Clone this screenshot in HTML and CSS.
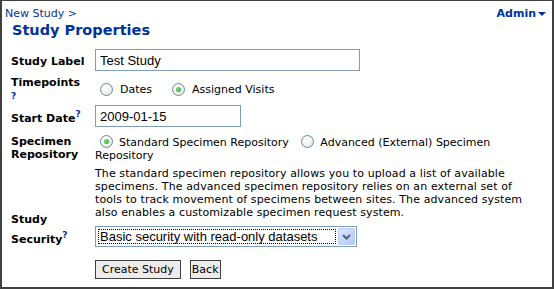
FILE: index.html
```html
<!DOCTYPE html>
<html lang="en">
<head>
    <meta charset="UTF-8">
    <title>Study Properties</title>
    <link rel="stylesheet" href="styles.css">
</head>
<body>

    <div class="frame">
        <!-- Header: breadcrumb and admin menu -->
        <div class="top">
            <div class="crumbs"><a href="#">New Study</a> &gt;</div>
            <div class="admin">Admin<span class="caret"></span></div>
        </div>
        <h1>Study Properties</h1>

        <div class="form">
            <div class="label row-label">Study Label</div>
            <div class="field row-label"><input type="text" class="text wide" value="Test Study"></div>

            <div class="label row-time">Timepoints<br><span class="help">?</span></div>
            <div class="field row-time radios">
                <span class="radio"></span><span class="opt">Dates</span>
                <span class="radio on"></span><span class="opt">Assigned Visits</span>
            </div>

            <div class="label row-date">Start Date<sup class="help">?</sup></div>
            <div class="field row-date"><input type="text" class="text short" value="2009-01-15"></div>

            <div class="label row-spec">Specimen<br>Repository</div>
            <div class="field row-spec spec">
                <span class="radio on"></span><span class="opt">Standard Specimen Repository</span>
                <span class="radio"></span><span class="opt">Advanced (External) Specimen</span><br>Repository
            </div>

            <div class="label"></div>
            <div class="field desc">
                The standard specimen repository allows you to upload a list of available<br>
                specimens. The advanced specimen repository relies on an external set of<br>
                tools to track movement of specimens between sites. The advanced system<br>
                also enables a customizable specimen request system.
            </div>

            <div class="label row-sec">Study<br><span class="sec2">Security<sup class="help">?</sup></span></div>
            <div class="field row-sec">
                <div class="select">
                    <span class="select-value">Basic security with read-only datasets</span>
                    <span class="select-btn">
                        <svg width="9" height="6" viewBox="0 0 9 6"><path d="M1 1 L4.5 4.5 L8 1" fill="none" stroke="#4d6185" stroke-width="2"/></svg>
                    </span>
                </div>
            </div>

            <div class="label"></div>
            <div class="field buttons">
                <button class="btn">Create Study</button>
                <button class="btn btn-tight">Back</button>
            </div>
        </div>
    </div>

</body>
</html>
```

FILE: styles.css
```css
/* Global Styles */
body {
    margin: 0;
    font-family: 'DejaVu Sans', Verdana, sans-serif;
    font-size: 11px;
    line-height: 13px;
    color: #000;
    background: #fff;
}

.frame {
    box-sizing: border-box;
    width: 554px;
    height: 289px;
    border: 2px solid #404040;
    border-top-width: 1px;
    padding: 6px 6px 0 3px;
}

/* Header */
.top {
    display: flex;
    justify-content: space-between;
}

.crumbs a {
    color: #003399;
    text-decoration: none;
}

.crumbs {
    color: #003399;
}

.admin {
    font-weight: bold;
    color: #003399;
    display: flex;
    align-items: center;
}

.caret {
    display: inline-block;
    margin-left: 2px;
    margin-top: 1px;
    border-left: 4px solid transparent;
    border-right: 4px solid transparent;
    border-top: 4px solid #003399;
}

h1 {
    margin: 1px 0 0 7px;
    font-size: 14.5px;
    line-height: 18px;
    font-weight: bold;
    color: #003399;
}

/* Form grid */
.form {
    display: grid;
    grid-template-columns: 84px 1fr;
    padding-left: 6px;
    margin-top: 10px;
}

.label {
    font-weight: bold;
}

.help {
    color: #003399;
    font-size: 9px;
    font-weight: bold;
}

sup.help {
    line-height: 0;
}

.row-label.label { margin-top: 6px; }
.row-time { margin-top: 5px; }
.row-date { margin-top: 2px; }
.row-date.label { margin-top: 9px; }
.row-spec { margin-top: 8px; }

.text {
    box-sizing: border-box;
    height: 22px;
    border: 1px solid #7f9db9;
    padding: 0 4px;
    font-family: 'Liberation Sans', Arial, sans-serif;
    font-size: 13px;
    color: #000;
    margin: 0;
}

.wide { width: 265px; }
.short { width: 146px; }

/* Radio buttons */
.radios {
    display: flex;
    align-items: center;
    padding-top: 7px;
    align-self: start;
}

.radio {
    display: inline-block;
    box-sizing: border-box;
    width: 13px;
    height: 13px;
    border-radius: 50%;
    border: 1px solid #6e87a4;
    background: radial-gradient(circle at 40% 35%, #ffffff 20%, #dcdcd5 100%);
    vertical-align: -2px;
    position: relative;
    margin-left: 5px;
}

.radio.on::after {
    content: "";
    position: absolute;
    left: 3px;
    top: 3px;
    width: 5px;
    height: 5px;
    border-radius: 50%;
    background: radial-gradient(circle at 40% 40%, #7be07b, #21a121);
}

.opt {
    margin-left: 7px;
    margin-right: 15px;
}

.spec .opt {
    margin-left: 6px;
    margin-right: 0;
}

.spec .radio {
    margin-left: 5px;
}

.spec .opt + .radio {
    margin-left: 9px;
}

.desc {
    margin-top: 5px;
    letter-spacing: 0.1px;
}

.row-sec.label {
    margin-top: -6px;
    line-height: 13px;
}

.sec2 {
    display: inline-block;
    margin-top: 7px;
}

.row-sec.field {
    margin-top: 7px;
}

/* Fake select */
.select {
    box-sizing: border-box;
    width: 262px;
    height: 21px;
    border: 1px solid #7f9db9;
    display: flex;
    align-items: center;
    padding: 1px;
    font-family: 'Liberation Sans', Arial, sans-serif;
    font-size: 13px;
}

.select-value {
    flex: 1;
    height: 15px;
    line-height: 15px;
    outline: 1px dotted #000;
    outline-offset: -1px;
    padding-left: 2px;
    margin: 0 2px 0 1px;
}

.select-btn {
    width: 17px;
    height: 17px;
    box-sizing: border-box;
    border: 1px solid #b9cdf8;
    border-radius: 2px;
    background: linear-gradient(135deg, #dce7fe, #b4c8f6);
    display: flex;
    align-items: center;
    justify-content: center;
}

/* Buttons */
.buttons {
    margin-top: 13px;
    display: flex;
    gap: 9px;
}

.btn {
    font-family: 'DejaVu Sans', Verdana, sans-serif;
    font-size: 11px;
    height: 19px;
    padding: 0 6px;
    background: #ececec;
    border: 1px solid #404040;
    color: #000;
    margin: 0;
}

.btn-tight {
    padding: 0 1px;
}
```
